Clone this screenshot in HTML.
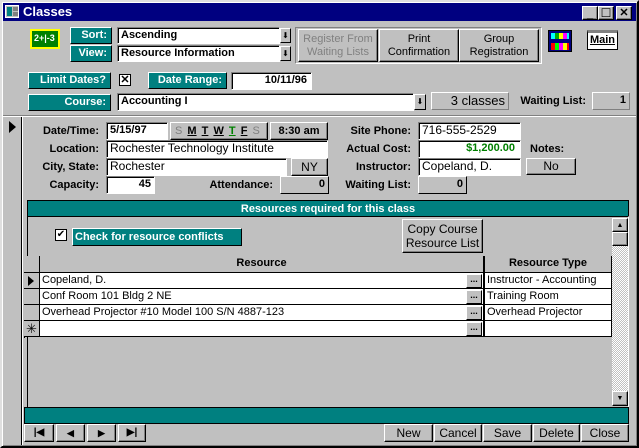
<!DOCTYPE html>
<html><head><meta charset="utf-8"><style>
*{box-sizing:border-box;margin:0;padding:0;white-space:nowrap}
body{width:639px;height:448px;background:#c0c0c0;font-family:"Liberation Sans",sans-serif;font-size:12px;position:relative;overflow:hidden}
.a{position:absolute}
.win{left:0;top:0;width:639px;height:448px;border:2px solid;border-color:#dfdfdf #000 #000 #dfdfdf;box-shadow:inset 1px 1px #fff,inset -1px -1px #808080}
.title{left:3px;top:3px;width:633px;height:18px;background:#000080;color:#fff;font-weight:bold;font-size:13px;line-height:18px;padding-left:20px}
.lbl{background:#008080;color:#fff;font-weight:bold;font-size:11px;text-align:right;padding-right:4px;line-height:15px;border:1px solid;border-color:#fff #000 #000 #fff}
.fld{background:#fff;border:1px solid;border-color:#808080 #fff #fff #808080;box-shadow:inset 1px 1px #000;font-size:12px;line-height:15px;padding-left:3px}
.b{font-weight:bold;font-size:11px}
.btn{background:#c0c0c0;border:1px solid;border-color:#fff #000 #000 #fff;box-shadow:inset -1px -1px #808080;text-align:center;font-size:11px;line-height:13px}
.flat{background:#c0c0c0;border:1px solid;border-color:#808080 #fff #fff #808080;text-align:right;padding-right:3px;font-weight:bold;font-size:11px;line-height:15px}
.rl{font-weight:bold;text-align:right;font-size:11px;line-height:16px}
.dd{background:#c0c0c0;border:1px solid;border-color:#fff #000 #000 #fff;font-size:8px;text-align:center;line-height:14px}
.cell{background:#fff;border-right:1px solid #000;border-bottom:1px solid #000;font-size:11px;line-height:15px;padding-left:2px;overflow:hidden}
.sel{background:#c0c0c0;border-right:1px solid #000;border-bottom:1px solid #000}
.dots{background:#c0c0c0;border:1px solid;border-color:#fff #000 #000 #fff;font-size:9px;font-weight:bold;text-align:center;line-height:8px}
</style></head><body>
<div class="a win"></div>
<div class="a title">Classes</div>
<div class="a" style="left:5px;top:5px;width:14px;height:13px;background:#c0c0c0;border:1px solid #fff"><div class="a" style="left:1px;top:1px;width:5px;height:9px;background:#008080"></div><div class="a" style="left:7px;top:1px;width:5px;height:4px;background:#808080"></div><div class="a" style="left:7px;top:6px;width:5px;height:4px;background:#808080"></div></div>
<div class="a btn" style="left:582px;top:6px;width:16px;height:14px;font-weight:bold;line-height:14px">_</div>
<div class="a btn" style="left:598px;top:6px;width:16px;height:14px;font-size:12px">☐</div>
<div class="a btn" style="left:616px;top:6px;width:16px;height:14px;font-weight:bold;font-size:11px">✕</div>

<div class="a" style="left:30px;top:29px;width:30px;height:20px;background:#008000;border:2px solid #ff0;color:#fff;font-size:9px;font-weight:bold;line-height:14px;padding-left:2px">2+|-3</div>
<div class="a lbl" style="left:70px;top:27px;width:42px;height:17px">Sort:</div>
<div class="a lbl" style="left:70px;top:45px;width:42px;height:17px">View:</div>
<div class="a fld b" style="left:117px;top:27px;width:163px;height:17px">Ascending</div>
<div class="a fld b" style="left:117px;top:45px;width:163px;height:17px">Resource Information</div>
<div class="a dd" style="left:280px;top:28px;width:11px;height:15px">⬇</div>
<div class="a dd" style="left:280px;top:46px;width:11px;height:15px">⬇</div>
<div class="a" style="left:295px;top:27px;width:247px;height:37px;border:1px solid;border-color:#808080 #fff #fff #808080"></div>
<div class="a btn" style="left:298px;top:29px;width:80px;height:33px;color:#808080;padding-top:3px">Register From<br>Waiting Lists</div>
<div class="a btn" style="left:379px;top:29px;width:80px;height:33px;padding-top:3px">Print<br>Confirmation</div>
<div class="a btn" style="left:459px;top:29px;width:80px;height:33px;padding-top:3px">Group<br>Registration</div>
<div class="a" style="left:548px;top:30px;width:24px;height:22px;background:#000080;border:1px solid #000"><div class="a" style="left:2px;top:2px;width:18px;height:6px;background:linear-gradient(90deg,#0ff 0 4px,#0a0 4px 8px,#ff0 8px 12px,#f0f 12px 16px,#0ff 16px)"></div><div class="a" style="left:2px;top:12px;width:18px;height:7px;background:linear-gradient(90deg,#f00 0 4px,#0f0 4px 8px,#f0f 8px 12px,#ff0 12px 16px,#f00 16px)"></div></div>
<div class="a" style="left:587px;top:30px;width:31px;height:20px;background:#fff;border:1px solid #000;border-top:3px solid #808080;font-weight:bold;font-size:11px;text-decoration:underline;text-align:center;line-height:15px">Main</div>

<div class="a lbl" style="left:28px;top:72px;width:83px;height:17px">Limit Dates?</div>
<div class="a" style="left:119px;top:74px;width:12px;height:12px;background:#fff;border:1px solid #000;font-size:11px;line-height:10px;text-align:center;font-weight:bold">✕</div>
<div class="a lbl" style="left:148px;top:72px;width:79px;height:17px">Date Range:</div>
<div class="a fld b" style="left:231px;top:72px;width:81px;height:18px;text-align:right;padding-right:4px">10/11/96</div>
<div class="a lbl" style="left:28px;top:94px;width:83px;height:17px">Course:</div>
<div class="a fld b" style="left:117px;top:93px;width:297px;height:18px">Accounting I</div>
<div class="a dd" style="left:414px;top:94px;width:12px;height:16px">⬇</div>
<div class="a flat" style="left:431px;top:92px;width:78px;height:18px;font-weight:normal;font-size:13px;border-color:#fff #808080 #808080 #fff">3 classes</div>
<div class="a rl" style="left:512px;top:93px;width:74px">Waiting List:</div>
<div class="a flat" style="left:592px;top:92px;width:38px;height:18px;border-color:#fff #808080 #808080 #fff">1</div>

<div class="a" style="left:3px;top:115px;width:633px;height:2px;border-top:1px solid #808080;border-bottom:1px solid #fff"></div>
<div class="a" style="left:21px;top:117px;width:2px;height:328px;border-left:1px solid #000;border-right:1px solid #fff"></div>
<div class="a" style="left:9px;top:121px;width:0;height:0;border-left:7px solid #000;border-top:6px solid transparent;border-bottom:6px solid transparent"></div>

<div class="a rl" style="left:20px;top:123px;width:79px">Date/Time:</div>
<div class="a rl" style="left:20px;top:141px;width:79px">Location:</div>
<div class="a rl" style="left:20px;top:159px;width:79px">City, State:</div>
<div class="a rl" style="left:20px;top:177px;width:79px">Capacity:</div>
<div class="a fld b" style="left:106px;top:122px;width:62px;height:18px">5/15/97</div>
<div class="a btn" style="left:170px;top:122px;width:98px;height:18px;font-size:11px;font-weight:bold;line-height:16px;text-align:left;padding-left:4px;word-spacing:2px"><span style="color:#808080;font-weight:normal">S</span> <u>M</u> <u>T</u> <u>W</u> <u style="color:#008000">T</u> <u>F</u> <span style="color:#808080;font-weight:normal">S</span></div>
<div class="a btn b" style="left:270px;top:122px;width:58px;height:18px;line-height:16px">8:30 am</div>
<div class="a fld" style="left:106px;top:140px;width:222px;height:18px">Rochester Technology Institute</div>
<div class="a fld" style="left:106px;top:158px;width:181px;height:18px">Rochester</div>
<div class="a btn" style="left:291px;top:158px;width:37px;height:18px;font-size:12px;line-height:16px">NY</div>
<div class="a fld b" style="left:106px;top:176px;width:49px;height:18px;text-align:right;padding-right:3px">45</div>
<div class="a rl" style="left:190px;top:177px;width:83px">Attendance:</div>
<div class="a flat" style="left:280px;top:176px;width:49px;height:18px;border-color:#fff #000 #000 #fff">0</div>

<div class="a rl" style="left:330px;top:123px;width:81px">Site Phone:</div>
<div class="a rl" style="left:330px;top:141px;width:81px">Actual Cost:</div>
<div class="a rl" style="left:330px;top:159px;width:81px">Instructor:</div>
<div class="a rl" style="left:330px;top:177px;width:81px">Waiting List:</div>
<div class="a fld" style="left:418px;top:122px;width:103px;height:18px">716-555-2529</div>
<div class="a fld b" style="left:418px;top:140px;width:103px;height:18px;color:#008000;text-align:right;padding-right:5px">$1,200.00</div>
<div class="a fld" style="left:418px;top:158px;width:103px;height:18px">Copeland, D.</div>
<div class="a flat" style="left:418px;top:176px;width:49px;height:18px;border-color:#fff #000 #000 #fff">0</div>
<div class="a rl" style="left:530px;top:141px;width:40px;text-align:left">Notes:</div>
<div class="a btn" style="left:526px;top:158px;width:50px;height:17px;font-size:12px;line-height:15px">No</div>

<div class="a" style="left:27px;top:200px;width:602px;height:17px;background:#008080;color:#fff;font-weight:bold;font-size:11px;text-align:center;line-height:16px;border:1px solid #000">Resources required for this class</div>
<div class="a" style="left:27px;top:216px;width:602px;height:192px;border:1px solid;border-color:#000 #fff #000 #000"></div>
<div class="a" style="left:55px;top:229px;width:12px;height:12px;background:#fff;border:1px solid #000;font-size:10px;line-height:10px;text-align:center">✔</div>
<div class="a lbl" style="left:72px;top:228px;width:170px;height:18px;text-align:left;padding-left:2px;line-height:16px">Check for resource conflicts</div>
<div class="a btn" style="left:402px;top:219px;width:81px;height:34px;font-size:12px;line-height:14px;padding-top:2px">Copy Course<br>Resource List</div>
<div class="a" style="left:612px;top:218px;width:16px;height:188px;background:repeating-conic-gradient(#c0c0c0 0 25%,#fff 0 50%) 0 0/2px 2px"></div>
<div class="a btn" style="left:612px;top:218px;width:16px;height:14px;font-size:7px">▲</div>
<div class="a btn" style="left:612px;top:232px;width:16px;height:14px"></div>
<div class="a btn" style="left:612px;top:391px;width:16px;height:15px;font-size:7px">▼</div>

<div class="a" style="left:24px;top:256px;width:588px;height:82px;border-top:1px solid #000;border-left:1px solid #000"></div>
<div class="a sel" style="left:24px;top:256px;width:16px;height:17px"></div>
<div class="a sel b" style="left:40px;top:256px;width:444px;height:17px;text-align:center;line-height:15px">Resource</div>
<div class="a sel b" style="left:484px;top:256px;width:128px;height:17px;text-align:center;line-height:15px;border-left:1px solid #000">Resource Type</div>

<div class="a sel" style="left:24px;top:273px;width:16px;height:16px"><div class="a" style="left:4px;top:3px;border-left:6px solid #000;border-top:5px solid transparent;border-bottom:5px solid transparent"></div></div>
<div class="a cell" style="left:40px;top:273px;width:444px;height:16px">Copeland, D.</div>
<div class="a cell" style="left:484px;top:273px;width:128px;height:16px;border-left:1px solid #000">Instructor - Accounting</div>
<div class="a sel" style="left:24px;top:289px;width:16px;height:16px"></div>
<div class="a cell" style="left:40px;top:289px;width:444px;height:16px">Conf Room 101 Bldg 2 NE</div>
<div class="a cell" style="left:484px;top:289px;width:128px;height:16px;border-left:1px solid #000">Training Room</div>
<div class="a sel" style="left:24px;top:305px;width:16px;height:16px"></div>
<div class="a cell" style="left:40px;top:305px;width:444px;height:16px">Overhead Projector #10 Model 100 S/N 4887-123</div>
<div class="a cell" style="left:484px;top:305px;width:128px;height:16px;border-left:1px solid #000">Overhead Projector</div>
<div class="a sel" style="left:24px;top:321px;width:16px;height:16px;text-align:center;font-size:13px;line-height:15px">✳</div>
<div class="a cell" style="left:40px;top:321px;width:444px;height:16px"></div>
<div class="a cell" style="left:484px;top:321px;width:128px;height:16px;border-left:1px solid #000"></div>
<div class="a dots" style="left:466px;top:274px;width:16px;height:14px">...</div>
<div class="a dots" style="left:466px;top:290px;width:16px;height:14px">...</div>
<div class="a dots" style="left:466px;top:306px;width:16px;height:14px">...</div>
<div class="a dots" style="left:466px;top:322px;width:16px;height:14px">...</div>

<div class="a" style="left:24px;top:407px;width:605px;height:17px;background:#008080;border:1px solid #000"></div>
<div class="a btn b" style="left:24px;top:424px;width:30px;height:18px;font-size:10px;line-height:16px">|◀</div>
<div class="a btn b" style="left:56px;top:424px;width:29px;height:18px;font-size:9px;line-height:16px">◀</div>
<div class="a btn b" style="left:87px;top:424px;width:29px;height:18px;font-size:9px;line-height:16px">▶</div>
<div class="a btn b" style="left:118px;top:424px;width:28px;height:18px;font-size:10px;line-height:16px">▶|</div>
<div class="a btn" style="left:384px;top:424px;width:49px;height:18px;font-size:12px;line-height:16px">New</div>
<div class="a btn" style="left:434px;top:424px;width:48px;height:18px;font-size:12px;line-height:16px">Cancel</div>
<div class="a btn" style="left:483px;top:424px;width:49px;height:18px;font-size:12px;line-height:16px">Save</div>
<div class="a btn" style="left:533px;top:424px;width:47px;height:18px;font-size:12px;line-height:16px">Delete</div>
<div class="a btn" style="left:581px;top:424px;width:48px;height:18px;font-size:12px;line-height:16px">Close</div>
</body></html>
